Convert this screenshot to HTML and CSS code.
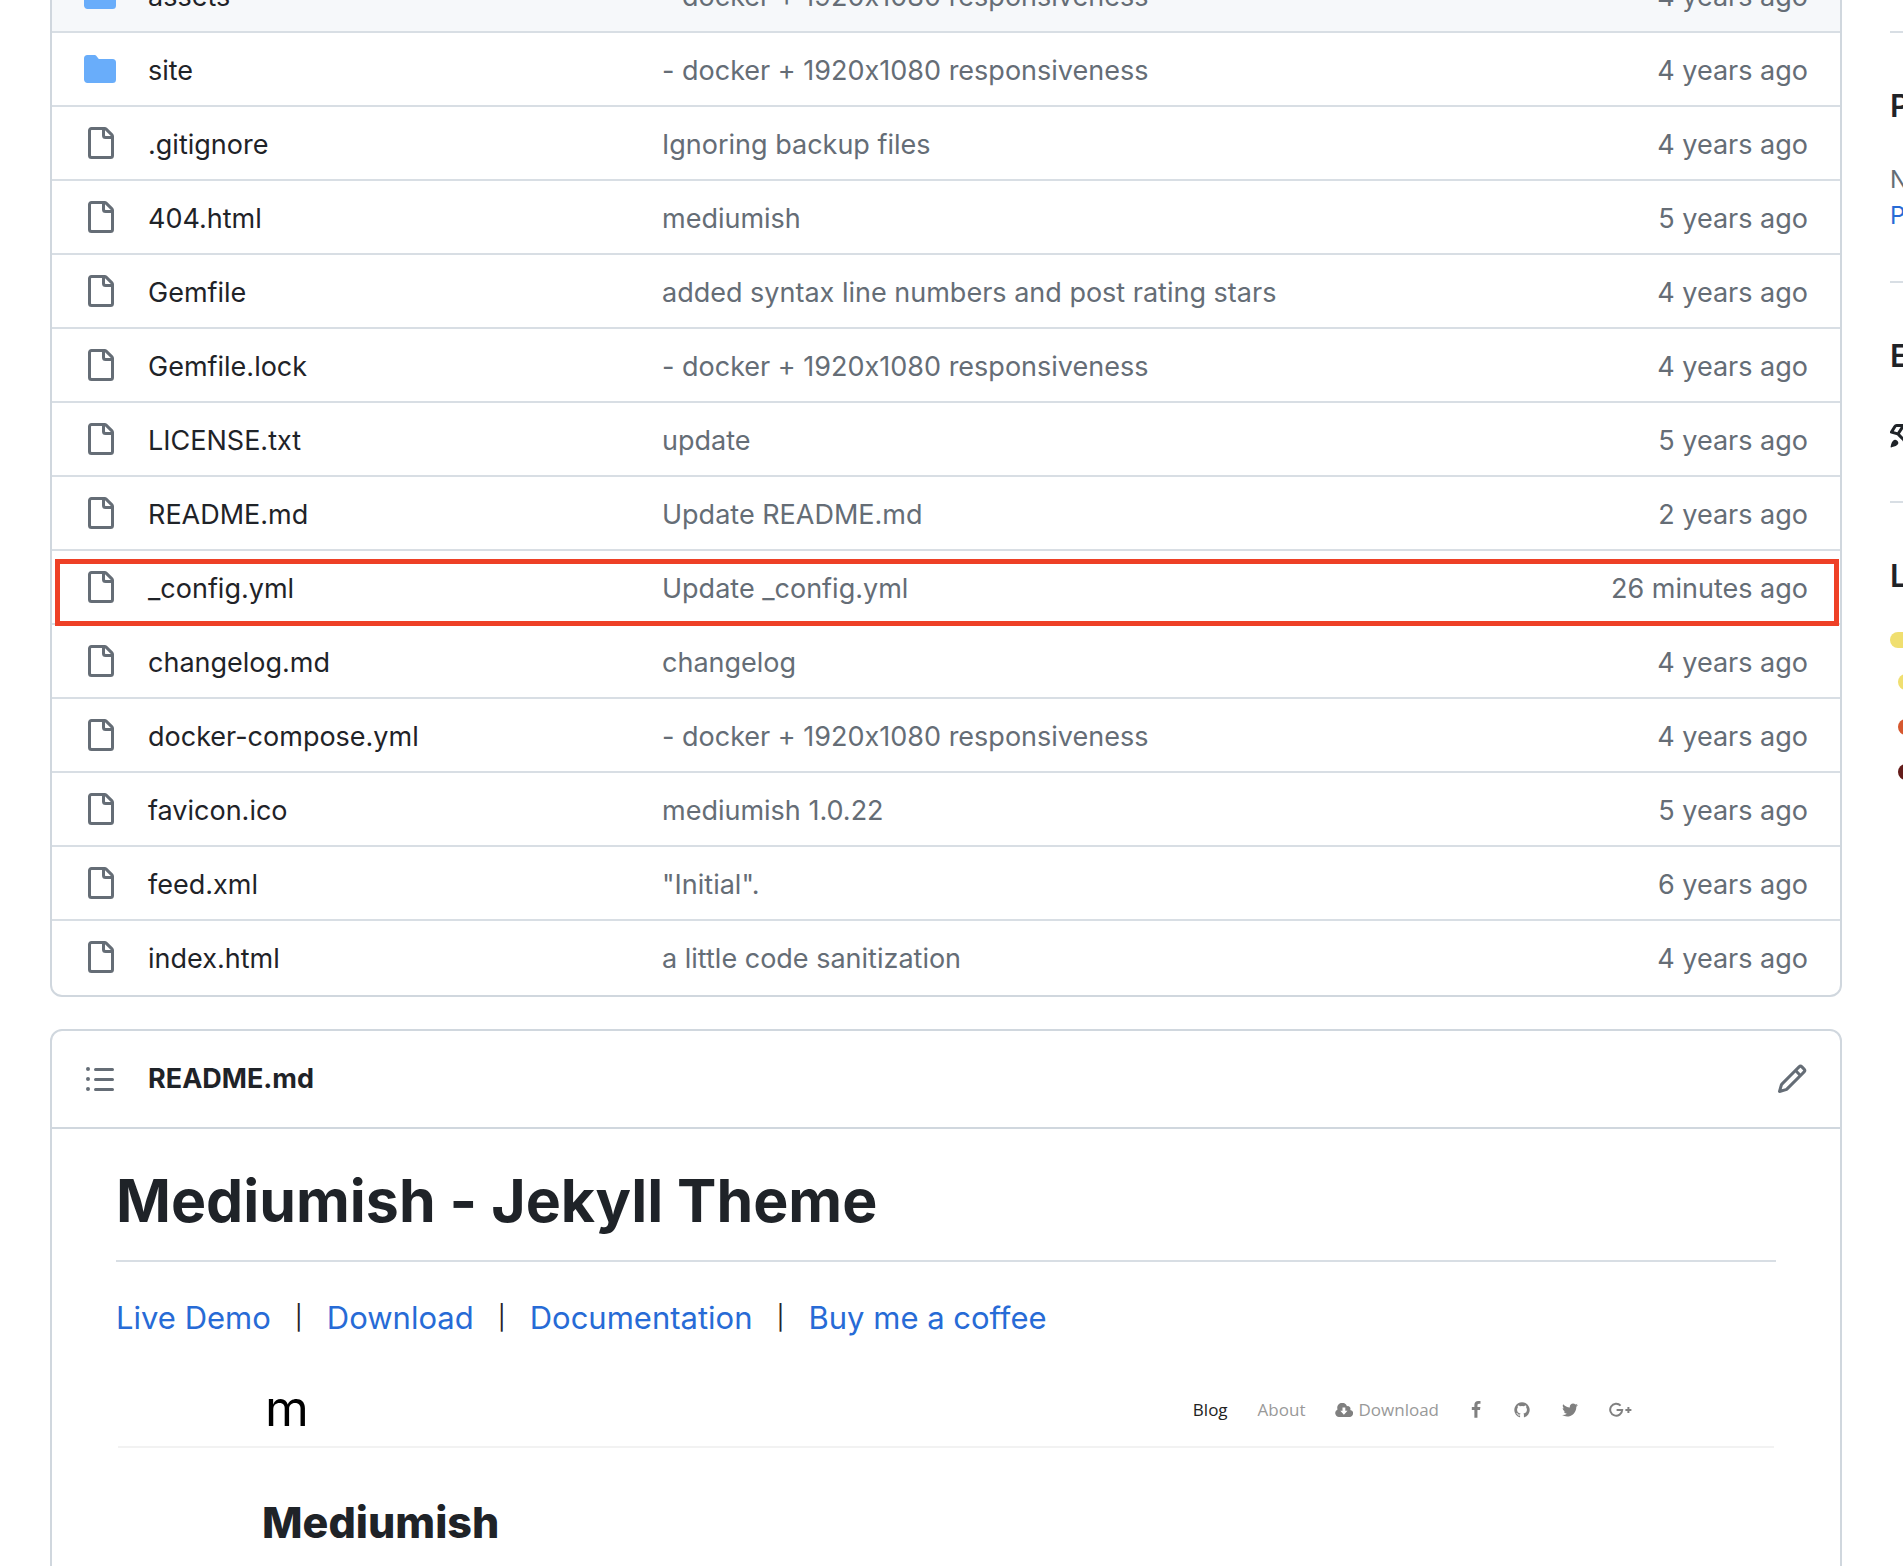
FILE: index.html
```html
<!DOCTYPE html>
<html lang="en">
<head>
    <meta charset="UTF-8">
    <meta name="viewport" content="width=device-width, initial-scale=1.0">
    <title>Mediumish - Jekyll Theme</title>
    <link rel="stylesheet" href="styles.css">
</head>
<body>
    <!-- Shared icons -->
    <svg class="sprite" aria-hidden="true">
        <symbol id="folder" viewBox="0 0 16 16"><path d="M1.75 1A1.75 1.75 0 0 0 0 2.75v10.5C0 14.216.784 15 1.75 15h12.5A1.75 1.75 0 0 0 16 13.25v-8.5A1.75 1.75 0 0 0 14.25 3H7.5a.25.25 0 0 1-.2-.1l-.9-1.2C6.07 1.26 5.55 1 5 1H1.75Z"/></symbol>
        <symbol id="file" viewBox="0 0 16 16"><path d="M2 1.75C2 .784 2.784 0 3.75 0h6.586c.464 0 .909.184 1.237.513l2.914 2.914c.329.328.513.773.513 1.237v9.586A1.75 1.75 0 0 1 13.25 16h-9.5A1.75 1.75 0 0 1 2 14.25Zm1.75-.25a.25.25 0 0 0-.25.25v12.5c0 .138.112.25.25.25h9.5a.25.25 0 0 0 .25-.25V6h-2.75A1.75 1.75 0 0 1 9 4.25V1.5Zm6.75.062V4.25c0 .138.112.25.25.25h2.688l-.011-.013-2.914-2.914-.013-.011Z"/></symbol>
    </svg>

    <div class="layout">
        <main class="content">
            <div class="box files">
                <table>
                    <colgroup>
                        <col class="col-icon">
                        <col class="col-name">
                        <col>
                        <col class="col-age">
                    </colgroup>
                    <tbody>
                        <tr class="hovered">
                            <td><svg class="icon folder"><use href="#folder"/></svg></td>
                            <td><a href="#">assets</a></td>
                            <td><a href="#">- docker + 1920x1080 responsiveness</a></td>
                            <td>4 years ago</td>
                        </tr>
                        <tr>
                            <td><svg class="icon folder"><use href="#folder"/></svg></td>
                            <td><a href="#">site</a></td>
                            <td><a href="#">- docker + 1920x1080 responsiveness</a></td>
                            <td>4 years ago</td>
                        </tr>
                        <tr>
                            <td><svg class="icon"><use href="#file"/></svg></td>
                            <td><a href="#">.gitignore</a></td>
                            <td><a href="#">Ignoring backup files</a></td>
                            <td>4 years ago</td>
                        </tr>
                        <tr>
                            <td><svg class="icon"><use href="#file"/></svg></td>
                            <td><a href="#">404.html</a></td>
                            <td><a href="#">mediumish</a></td>
                            <td>5 years ago</td>
                        </tr>
                        <tr>
                            <td><svg class="icon"><use href="#file"/></svg></td>
                            <td><a href="#">Gemfile</a></td>
                            <td><a href="#">added syntax line numbers and post rating stars</a></td>
                            <td>4 years ago</td>
                        </tr>
                        <tr>
                            <td><svg class="icon"><use href="#file"/></svg></td>
                            <td><a href="#">Gemfile.lock</a></td>
                            <td><a href="#">- docker + 1920x1080 responsiveness</a></td>
                            <td>4 years ago</td>
                        </tr>
                        <tr>
                            <td><svg class="icon"><use href="#file"/></svg></td>
                            <td><a href="#">LICENSE.txt</a></td>
                            <td><a href="#">update</a></td>
                            <td>5 years ago</td>
                        </tr>
                        <tr>
                            <td><svg class="icon"><use href="#file"/></svg></td>
                            <td><a href="#">README.md</a></td>
                            <td><a href="#">Update README.md</a></td>
                            <td>2 years ago</td>
                        </tr>
                        <tr class="marked">
                            <td><svg class="icon"><use href="#file"/></svg></td>
                            <td><a href="#">_config.yml</a></td>
                            <td><a href="#">Update _config.yml</a></td>
                            <td>26 minutes ago<span class="marker"></span></td>
                        </tr>
                        <tr>
                            <td><svg class="icon"><use href="#file"/></svg></td>
                            <td><a href="#">changelog.md</a></td>
                            <td><a href="#">changelog</a></td>
                            <td>4 years ago</td>
                        </tr>
                        <tr>
                            <td><svg class="icon"><use href="#file"/></svg></td>
                            <td><a href="#">docker-compose.yml</a></td>
                            <td><a href="#">- docker + 1920x1080 responsiveness</a></td>
                            <td>4 years ago</td>
                        </tr>
                        <tr>
                            <td><svg class="icon"><use href="#file"/></svg></td>
                            <td><a href="#">favicon.ico</a></td>
                            <td><a href="#">mediumish 1.0.22</a></td>
                            <td>5 years ago</td>
                        </tr>
                        <tr>
                            <td><svg class="icon"><use href="#file"/></svg></td>
                            <td><a href="#">feed.xml</a></td>
                            <td><a href="#">"Initial".</a></td>
                            <td>6 years ago</td>
                        </tr>
                        <tr>
                            <td><svg class="icon"><use href="#file"/></svg></td>
                            <td><a href="#">index.html</a></td>
                            <td><a href="#">a little code sanitization</a></td>
                            <td>4 years ago</td>
                        </tr>
                    </tbody>
                </table>
            </div>

            <section class="box readme">
                <header class="readme-header">
                    <button type="button" aria-label="Outline">
                        <svg class="icon" viewBox="0 0 16 16"><path d="M5.75 2.5h8.5a.75.75 0 0 1 0 1.5h-8.5a.75.75 0 0 1 0-1.5Zm0 5h8.5a.75.75 0 0 1 0 1.5h-8.5a.75.75 0 0 1 0-1.5Zm0 5h8.5a.75.75 0 0 1 0 1.5h-8.5a.75.75 0 0 1 0-1.5ZM2 14a1 1 0 1 1 0-2 1 1 0 0 1 0 2Zm1-6a1 1 0 1 1-2 0 1 1 0 0 1 2 0ZM2 4a1 1 0 1 1 0-2 1 1 0 0 1 0 2Z"/></svg>
                    </button>
                    <h2><a href="#">README.md</a></h2>
                    <button type="button" aria-label="Edit file">
                        <svg class="icon" viewBox="0 0 16 16"><path d="M11.013 1.427a1.75 1.75 0 0 1 2.474 0l1.086 1.086a1.75 1.75 0 0 1 0 2.474l-8.61 8.61c-.21.21-.47.364-.756.445l-3.251.93a.75.75 0 0 1-.927-.928l.929-3.25c.081-.286.235-.547.445-.758l8.61-8.61Zm.176 4.823L9.75 4.81l-6.286 6.287a.253.253 0 0 0-.064.108l-.558 1.953 1.953-.558a.253.253 0 0 0 .108-.064Zm1.238-3.763a.25.25 0 0 0-.354 0L10.811 3.75l1.439 1.44 1.263-1.263a.25.25 0 0 0 0-.354Z"/></svg>
                    </button>
                </header>

                <article class="markdown">
                    <h1>Mediumish - Jekyll Theme</h1>
                    <p class="links">
                        <a href="#">Live Demo</a>
                        <span>|</span>
                        <a href="#">Download</a>
                        <span>|</span>
                        <a href="#">Documentation</a>
                        <span>|</span>
                        <a href="#">Buy me a coffee</a>
                    </p>

                    <!-- Theme preview -->
                    <div class="preview">
                        <div class="preview-bar">
                            <span class="preview-logo">m</span>
                            <nav class="preview-nav">
                                <a class="active" href="#">Blog</a>
                                <a href="#">About</a>
                                <a class="download" href="#">
                                    <svg width="18" height="14" viewBox="0 0 18 14"><path d="M4 14a4 4 0 0 1-1.5-7.6A5 5 0 0 1 12 3.2a2.8 2.8 0 0 1 3.3 3.7A3.6 3.6 0 0 1 14.2 14Z"/><path class="arrow" d="M7.5 4.5h2.8v3.3h2.2L8.9 11.7 5.3 7.8h2.2Z"/></svg>
                                    Download
                                </a>
                                <a href="#" aria-label="Facebook"><svg width="14" height="18" viewBox="199 0 1394 1792"><path d="M1343 12v264h-157q-86 0-116 36t-30 108v189h293l-39 296h-254v759h-306v-759h-255v-296h255v-218q0-186 104-288.5t277-102.5q147 0 228 12z"/></svg></a>
                                <a href="#" aria-label="GitHub"><svg width="18" height="18" viewBox="0 0 1792 1792"><path d="M896 128q209 0 385.5 103t279.5 279.5 103 385.5q0 251-146.5 451.5t-378.5 277.5q-27 5-40-7t-13-30q0-3 .5-76.5t.5-134.5q0-97-52-142 57-6 102.5-18t94-39 81-66.5 53-105 20.5-150.5q0-119-79-206 37-91-8-204-28-9-81 11t-92 44l-38 24q-93-26-192-26t-192 26q-16-11-42.5-27t-83.5-38.5-85-13.5q-45 113-8 204-79 87-79 206 0 85 20.5 150t52.5 105 80.5 67 94 39 102.5 18q-39 36-49 103-21 10-45 15t-57 5-65.5-21.5-55.5-62.5q-19-32-48.5-52t-49.5-24l-20-3q-21 0-29 4.5t-5 11.5 9 14 13 12l7 5q22 10 43.5 38t31.5 51l10 23q13 38 44 61.5t67 30 69.5 7 55.5-3.5l23-4q0 38 .5 88.5t.5 54.5q0 18-13 30t-40 7q-232-77-378.5-277.5t-146.5-451.5q0-209 103-385.5t279.5-279.5 385.5-103z"/></svg></a>
                                <a href="#" aria-label="Twitter"><svg width="18" height="18" viewBox="0 0 1792 1792"><path d="M1684 408q-67 98-162 167 1 14 1 42 0 130-38 259.5t-115.5 248.5-184.5 210.5-258 146-323 54.5q-271 0-496-145 35 4 78 4 225 0 401-138-105-2-188-64.5t-114-159.5q33 5 61 5 43 0 85-11-112-23-185.5-111.5t-73.5-205.5v-4q68 38 146 41-66-44-105-115t-39-154q0-88 44-163 121 149 294.5 238.5t371.5 99.5q-8-38-8-74 0-134 94.5-228.5t228.5-94.5q140 0 236 102 109-21 205-78-37 115-142 178 93-10 186-50z"/></svg></a>
                                <a href="#" aria-label="Google Plus"><svg class="line" width="23" height="16" viewBox="0 0 23 16"><path d="M11.6 3.6A6 6 0 1 0 13.2 8H7.6M16.4 8h6M19.4 5v6"/></svg></a>
                            </nav>
                        </div>
                        <div class="preview-title">Mediumish</div>
                    </div>
                </article>
            </section>
        </main>

        <aside class="sidebar">
            <section class="packages">
                <h2>Packages</h2>
                <p>No packages published</p>
                <p><a href="#">Publish your first package</a></p>
            </section>
            <section class="environments">
                <h2>Environments</h2>
                <svg class="icon rocket" viewBox="0 0 16 16"><path d="M14.064 0h.186C15.216 0 16 .784 16 1.75v.186a8.752 8.752 0 0 1-2.564 6.186l-.458.459c-.314.314-.641.616-.979.904v3.207c0 .608-.315 1.172-.833 1.49l-2.774 1.707a.749.749 0 0 1-1.11-.418l-.954-3.102a1.214 1.214 0 0 1-.145-.125L3.754 9.816a1.218 1.218 0 0 1-.124-.145L.528 8.717a.749.749 0 0 1-.418-1.11l1.71-2.774A1.748 1.748 0 0 1 3.31 4h3.204c.288-.338.59-.665.904-.979l.459-.458A8.749 8.749 0 0 1 14.064 0ZM8.938 3.623h-.002l-.458.458c-.76.76-1.437 1.598-2.02 2.5l-1.5 2.317 2.143 2.143 2.317-1.5c.902-.583 1.74-1.26 2.499-2.02l.459-.458a7.25 7.25 0 0 0 2.123-5.127V1.75a.25.25 0 0 0-.25-.25h-.186a7.249 7.249 0 0 0-5.125 2.123ZM3.56 14.56c-.732.732-2.334 1.045-3.005 1.148a.234.234 0 0 1-.201-.064.234.234 0 0 1-.064-.201c.103-.671.416-2.273 1.15-3.003a1.502 1.502 0 1 1 2.12 2.12Zm6.94-3.935c-.088.06-.177.118-.266.175l-2.35 1.521.548 1.783 1.949-1.2a.25.25 0 0 0 .119-.213ZM3.678 8.116 5.2 5.766c.058-.09.117-.178.176-.266H3.309a.25.25 0 0 0-.213.119l-1.2 1.95Z"/></svg>
            </section>
            <section class="languages">
                <h2>Languages</h2>
                <div class="bar"></div>
                <ul>
                    <li class="js"></li>
                    <li class="html"></li>
                    <li class="ruby"></li>
                </ul>
            </section>
        </aside>
    </div>
</body>
</html>
```
FILE: styles.css
```css
* {
    box-sizing: border-box;
}
body {
    margin: 0;
    height: 100vh;
    overflow: hidden;
    background: #fff;
    color: #1f2328;
    font-family: Inter, "Liberation Sans", sans-serif;
    font-size: 27px;
    font-variant-ligatures: no-contextual;
    line-height: 40px;
}
a {
    color: inherit;
    text-decoration: none;
}
h1, h2, p, ul {
    margin: 0;
    padding: 0;
}
h1, h2 {
    font-weight: 600;
}
button {
    display: flex;
    padding: 0;
    border: 0;
    background: none;
    color: inherit;
    cursor: pointer;
}
.sprite {
    position: absolute;
    width: 0;
    height: 0;
}
.icon {
    display: block;
    width: 32px;
    height: 32px;
    fill: #656d76;
}
.folder {
    fill: #69adfa;
}
.layout {
    display: grid;
    grid-template-columns: minmax(0, 1fr) 13px;
    gap: 48px;
    padding-left: 50px;
}
.box {
    border: 2px solid #d0d7de;
    border-radius: 12px;
}

/* File list */
.files {
    margin-top: -43px;
    margin-bottom: 32px;
    padding-bottom: 2px;
}
table {
    width: 100%;
    table-layout: fixed;
    border-collapse: separate;
    border-spacing: 0;
}
.col-icon {
    width: 96px;
}
.col-name {
    width: 514px;
}
.col-age {
    width: 320px;
}
td {
    height: 74px;
    padding: 4px 0 0;
    border-top: 2px solid #d8dee4;
    color: #656d76;
    white-space: nowrap;
}
td:first-child {
    padding: 0 0 0 32px;
}
td:nth-child(2) {
    color: #1f2328;
}
td:last-child {
    padding-right: 32px;
    text-align: right;
}
.hovered td {
    height: 72px;
    border-top: 0;
    background: #f6f8fa;
}
.marked {
    position: relative;
}
.marker {
    position: absolute;
    top: 10px;
    right: 1px;
    bottom: -3px;
    left: 3px;
    border: 5px solid #ee4026;
}

/* Readme */
.readme-header {
    display: flex;
    align-items: center;
    gap: 32px;
    padding: 28px 32px;
    border-bottom: 2px solid #d0d7de;
}
.readme-header h2 {
    flex: 1;
    font-size: 27px;
    font-weight: 700;
}
.markdown {
    padding: 32px 64px;
}
.markdown h1 {
    padding-bottom: 19px;
    border-bottom: 2px solid #d8dee4;
    font-size: 59px;
    font-weight: 700;
    line-height: 80px;
}
.links {
    display: flex;
    gap: 24px;
    margin: 32px 0;
    font-size: 31px;
    line-height: 48px;
}
.links span {
    font-size: 24px;
}
.links a {
    color: #276bd6;
}
.preview-bar {
    display: flex;
    align-items: center;
    justify-content: space-between;
    height: 74px;
    margin: 0 2px;
    padding: 0 142px 0 147px;
    border-bottom: 2px solid #f2f2f2;
}
.preview-logo {
    padding-bottom: 4px;
    color: #000;
    font-size: 50px;
    font-weight: 400;
}
.preview-nav {
    display: flex;
    align-items: center;
    gap: 30px;
    color: #999;
    font-family: "Open Sans", sans-serif;
    font-size: 17px;
    line-height: 24px;
}
.preview-nav .active {
    color: #222;
}
.preview-nav a {
    display: flex;
    align-items: center;
    gap: 5px;
}
.preview-nav svg {
    fill: #808080;
}
.preview-nav .arrow {
    fill: #fff;
}
.preview-nav .line {
    fill: none;
    stroke: #808080;
    stroke-width: 2;
}
.preview-title {
    padding: 46px 146px;
    font-size: 43px;
    font-weight: 800;
    line-height: 56px;
}

/* Sidebar */
.sidebar {
    padding-top: 31px;
    overflow: hidden;
    font-size: 24px;
    line-height: 36px;
    white-space: nowrap;
}
.sidebar section {
    padding: 53px 0 47px;
    border-top: 2px solid #d8dee4;
}
.sidebar h2 {
    margin-bottom: 36px;
    font-size: 31px;
    line-height: 40px;
}
.packages p {
    color: #656d76;
}
.packages a {
    color: #276bd6;
}
.rocket {
    margin: 40px 0 53px;
    fill: #1f2328;
}
.sidebar .environments {
    padding-bottom: 0;
}
.bar {
    width: 592px;
    height: 16px;
    border-radius: 8px;
    background: #f0df70;
}
.languages ul {
    display: grid;
    gap: 29px;
    padding: 26px 0 0 8px;
    list-style: none;
}
.languages li {
    width: 16px;
    height: 16px;
    border-radius: 50%;
}
.js {
    background: #f0df70;
}
.html {
    background: #d6582f;
}
.ruby {
    background: #641c1a;
}
```
